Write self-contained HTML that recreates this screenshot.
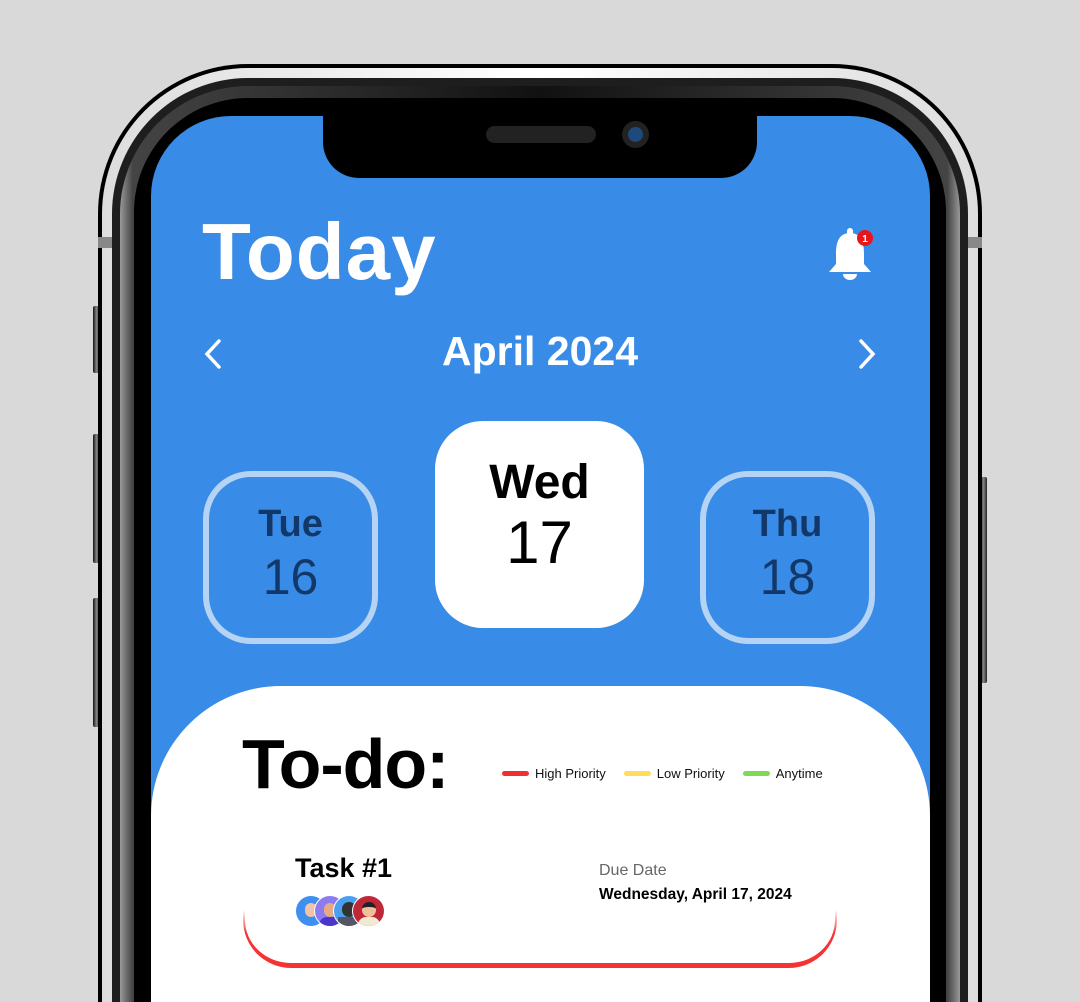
<!DOCTYPE html>
<html style="width:1080px;height:1002px;overflow:hidden"><head><meta charset="utf-8"><style>
*{margin:0;padding:0;box-sizing:border-box}
body{width:1080px;height:1002px;background:#d9d9d9;position:relative;overflow:hidden;font-family:"Liberation Sans",sans-serif}
.a{position:absolute}
.btn{position:absolute;background:linear-gradient(90deg,#111,#888,#222);border-radius:2px}
</style></head><body>
<div class="btn" style="left:93px;top:306px;width:7px;height:67px"></div>
<div class="btn" style="left:93px;top:434px;width:7px;height:129px"></div>
<div class="btn" style="left:93px;top:598px;width:7px;height:129px"></div>
<div class="btn" style="left:980px;top:477px;width:7px;height:206px"></div>

<div class="a" style="left:98px;top:64px;width:884px;bottom:0;border-radius:150px 150px 0 0;background:#000"></div>
<div class="a" style="left:102px;top:68px;width:876px;bottom:0;border-radius:146px 146px 0 0;background:linear-gradient(90deg,#ddd,#fff 50%,#ddd)"></div>
<div class="a" style="left:98px;top:237px;width:884px;height:11px;background:#888"></div>
<div class="a" style="left:112px;top:78px;width:856px;bottom:0;border-radius:136px 136px 0 0;background:#1e1e1e"></div>
<div class="a" style="left:120px;top:86px;width:840px;bottom:0;border-radius:128px 128px 0 0;background:linear-gradient(90deg,#999,#444 1.5%,#111 50%,#444 98.5%,#999)"></div>
<div class="a" style="left:134px;top:98px;width:812px;bottom:0;border-radius:114px 114px 0 0;background:#000"></div>

<div class="a" style="left:151px;top:116px;width:779px;bottom:0;border-radius:80px 80px 0 0;background:#388be6;overflow:hidden">
  <div class="a" style="left:0;top:570px;width:779px;bottom:0;background:#fff;border-radius:130px 130px 0 0"></div>
</div>
<div class="a" style="left:323px;top:100px;width:434px;height:78px;background:#000;border-radius:0 0 36px 36px"></div>
<div class="a" style="left:486px;top:126px;width:110px;height:17px;border-radius:9px;background:#222"></div>
<div class="a" style="left:622px;top:121px;width:27px;height:27px;border-radius:50%;background:#222"></div>
<div class="a" style="left:628px;top:127px;width:15px;height:15px;border-radius:50%;background:#1d4a7a"></div>

<div class="a" style="left:202px;top:206px;font-size:80px;font-weight:bold;color:#fff;letter-spacing:1px">Today</div>
<svg class="a" style="left:826px;top:226px" width="50" height="56" viewBox="0 0 50 56">
 <rect x="21" y="2" width="6" height="8" rx="3" fill="#fff"/>
 <path d="M24 7 C12 7 10 18 10 28 L10 38 L3 46 L45 46 L38 38 L38 28 C38 18 36 7 24 7Z" fill="#fff"/>
 <path d="M17 48 A7 6 0 0 0 31 48Z" fill="#fff"/>
 <circle cx="39" cy="12" r="8" fill="#e8161b"/>
 <text x="39" y="16" font-size="10" font-weight="bold" fill="#fff" text-anchor="middle" font-family="Liberation Sans">1</text>
</svg>

<svg class="a" style="left:200px;top:338px" width="24" height="32"><path d="M19 3 L7 16 L19 29" stroke="#fff" stroke-width="3.5" fill="none" stroke-linecap="round"/></svg>
<svg class="a" style="left:856px;top:338px" width="24" height="32"><path d="M5 3 L17 16 L5 29" stroke="#fff" stroke-width="3.5" fill="none" stroke-linecap="round"/></svg>
<div class="a" style="left:340px;top:328px;width:400px;text-align:center;font-size:41px;font-weight:bold;color:#fff">April 2024</div>

<div class="a" style="left:203px;top:471px;width:175px;height:173px;border:6px solid #b5d4f5;border-radius:48px;text-align:center;color:#12386a">
 <div style="font-size:38px;font-weight:bold;margin-top:26px">Tue</div>
 <div style="font-size:50px;margin-top:2px">16</div>
</div>
<div class="a" style="left:435px;top:421px;width:209px;height:207px;background:#fff;border-radius:48px;text-align:center;color:#000">
 <div style="font-size:48px;font-weight:bold;margin-top:34px">Wed</div>
 <div style="font-size:60px;margin-top:-2px">17</div>
</div>
<div class="a" style="left:700px;top:471px;width:175px;height:173px;border:6px solid #b5d4f5;border-radius:48px;text-align:center;color:#12386a">
 <div style="font-size:38px;font-weight:bold;margin-top:26px">Thu</div>
 <div style="font-size:50px;margin-top:2px">18</div>
</div>

<div class="a" style="left:242px;top:724px;font-size:70px;font-weight:bold;color:#000;letter-spacing:-1px">To-do:</div>
<div class="a" style="left:502px;top:766px;font-size:13px;color:#111;display:flex;align-items:center;white-space:nowrap">
 <span style="width:27px;height:5px;border-radius:3px;background:#f03030;margin-right:6px"></span>High Priority
 <span style="width:27px;height:5px;border-radius:3px;background:#ffdc5a;margin:0 6px 0 18px"></span>Low Priority
 <span style="width:27px;height:5px;border-radius:3px;background:#7ed957;margin:0 6px 0 18px"></span>Anytime
</div>

<div class="a" style="left:243px;top:910px;width:594px;height:58px;border-bottom:5px solid #f53333;border-left:2px solid #f53333;border-right:2px solid #f53333;border-radius:0 0 48px 48px;-webkit-mask-image:linear-gradient(180deg,transparent,#000 40%);mask-image:linear-gradient(180deg,transparent,#000 40%)"></div>
<div class="a" style="left:295px;top:853px;font-size:27px;font-weight:bold;color:#000">Task #1</div>
<div class="a" style="left:599px;top:862px;font-size:16px;color:#666">Due Date</div>
<div class="a" style="left:599px;top:886px;font-size:15.5px;font-weight:bold;color:#000">Wednesday, April 17, 2024</div>
<div class="a" style="left:295px;top:895px;width:32px;height:32px;border-radius:50%;background:#3f8ff0;border:1px solid #fff"><div style="margin:7px auto 0;width:12px;height:14px;border-radius:6px;background:#f4c2a8"></div></div>
<div class="a" style="left:314px;top:895px;width:32px;height:32px;border-radius:50%;background:#8c7cf0;border:1px solid #fff;overflow:hidden"><div style="margin:7px auto 0;width:12px;height:14px;border-radius:6px;background:#e8a985"></div><div style="margin:0 auto;width:22px;height:12px;border-radius:8px 8px 0 0;background:#4a36c8"></div></div>
<div class="a" style="left:333px;top:895px;width:32px;height:32px;border-radius:50%;background:#4aa0f0;border:1px solid #fff;overflow:hidden"><div style="margin:6px auto 0;width:14px;height:15px;border-radius:7px;background:#333"></div><div style="margin:0 auto;width:22px;height:12px;background:#556"></div></div>
<div class="a" style="left:352px;top:895px;width:33px;height:32px;border-radius:50%;background:#c0283a;border:1px solid #fff;overflow:hidden"><div style="margin:6px auto 0;width:14px;height:15px;border-radius:7px;background:#f0c09a;border-top:5px solid #222"></div><div style="margin:0 auto;width:22px;height:12px;border-radius:8px 8px 0 0;background:#f2ead0"></div></div>
</body></html>
